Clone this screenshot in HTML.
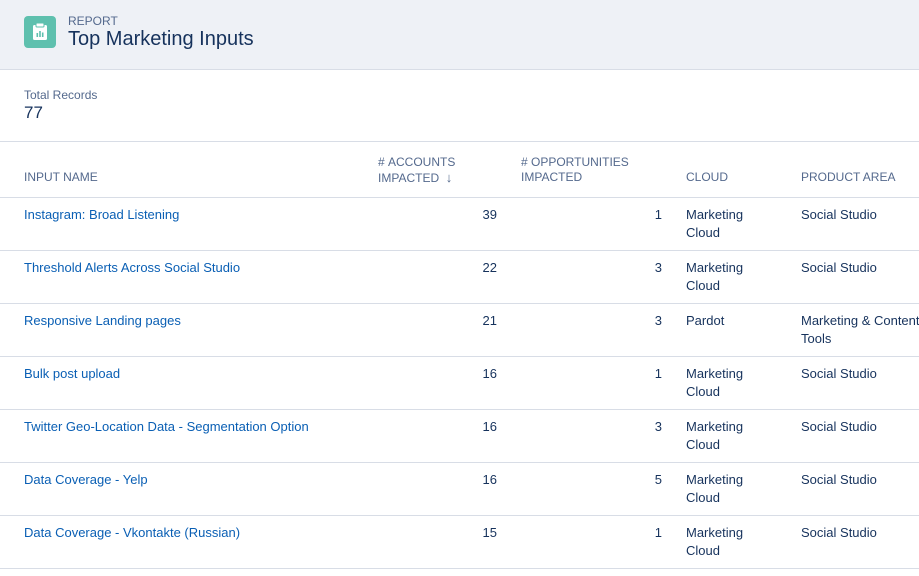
<!DOCTYPE html>
<html><head><style>
body{margin:0;width:919px;height:576px;overflow:hidden;background:#fff;font-family:"Liberation Sans",sans-serif;color:#16325c;}
.hdr{position:absolute;left:0;top:0;width:919px;height:69px;background:#eef1f6;border-bottom:1px solid #d8dde6;}
.icon{position:absolute;left:24px;top:16px;width:32px;height:32px;border-radius:4px;background:#5ec0ae;}
.lbl{position:absolute;left:68px;top:14px;font-size:12px;color:#54698d;}
.title{position:absolute;left:68px;top:28px;font-size:20px;color:#16325c;}
.tot{position:absolute;left:0;top:70px;width:919px;height:71px;border-bottom:1px solid #d8dde6;}
.t{position:absolute;font-size:13px;white-space:nowrap;line-height:18px;}
.th{color:#54698d;font-size:12px;line-height:15px;}
.row{position:absolute;left:0;width:919px;height:52px;border-bottom:1px solid #d8dde6;}
a{color:#0a5fb4;text-decoration:none}
</style></head><body>
<div class="hdr">
<div class="icon"><svg width="32" height="32" viewBox="0 0 32 32"><rect x="9" y="9" width="14" height="15" rx="1.5" fill="#fff"/><rect x="12" y="7" width="8" height="4" rx="1" fill="#fff" stroke="#5ec0ae" stroke-width="1"/><rect x="12.5" y="17" width="1.6" height="4" fill="#5ec0ae"/><rect x="15.2" y="15" width="1.6" height="6" fill="#5ec0ae"/><rect x="17.9" y="16.5" width="1.6" height="4.5" fill="#5ec0ae"/></svg></div>
<div class="lbl">REPORT</div>
<div class="title">Top Marketing Inputs</div>
</div>
<div class="tot">
<div class="t" style="left:24px;top:16px;font-size:12px;color:#54698d">Total Records</div>
<div class="t" style="left:24px;top:33px;font-size:17px;line-height:20px">77</div>
</div>
<div class="row" style="top:142px;height:55px">
<div class="t th" style="left:24px;top:28px">INPUT NAME</div>
<div class="t th" style="left:378px;top:13px">#&nbsp;ACCOUNTS<br>IMPACTED &nbsp;<b style="font-size:13px">↓</b></div>
<div class="t th" style="left:521px;top:13px">#&nbsp;OPPORTUNITIES<br>IMPACTED</div>
<div class="t th" style="left:686px;top:28px">CLOUD</div>
<div class="t th" style="left:801px;top:28px">PRODUCT AREA</div>
</div>
<div class="row" style="top:198px"><div class="t" style="left:24px;top:8px"><a>Instagram: Broad Listening</a></div><div class="t" style="right:422px;top:8px">39</div><div class="t" style="right:257px;top:8px">1</div><div class="t" style="left:686px;top:8px">Marketing<br>Cloud</div><div class="t" style="left:801px;top:8px">Social Studio</div></div>
<div class="row" style="top:251px"><div class="t" style="left:24px;top:8px"><a>Threshold Alerts Across Social Studio</a></div><div class="t" style="right:422px;top:8px">22</div><div class="t" style="right:257px;top:8px">3</div><div class="t" style="left:686px;top:8px">Marketing<br>Cloud</div><div class="t" style="left:801px;top:8px">Social Studio</div></div>
<div class="row" style="top:304px"><div class="t" style="left:24px;top:8px"><a>Responsive Landing pages</a></div><div class="t" style="right:422px;top:8px">21</div><div class="t" style="right:257px;top:8px">3</div><div class="t" style="left:686px;top:8px">Pardot</div><div class="t" style="left:801px;top:8px">Marketing &amp; Content<br>Tools</div></div>
<div class="row" style="top:357px"><div class="t" style="left:24px;top:8px"><a>Bulk post upload</a></div><div class="t" style="right:422px;top:8px">16</div><div class="t" style="right:257px;top:8px">1</div><div class="t" style="left:686px;top:8px">Marketing<br>Cloud</div><div class="t" style="left:801px;top:8px">Social Studio</div></div>
<div class="row" style="top:410px"><div class="t" style="left:24px;top:8px"><a>Twitter Geo-Location Data - Segmentation Option</a></div><div class="t" style="right:422px;top:8px">16</div><div class="t" style="right:257px;top:8px">3</div><div class="t" style="left:686px;top:8px">Marketing<br>Cloud</div><div class="t" style="left:801px;top:8px">Social Studio</div></div>
<div class="row" style="top:463px"><div class="t" style="left:24px;top:8px"><a>Data Coverage - Yelp</a></div><div class="t" style="right:422px;top:8px">16</div><div class="t" style="right:257px;top:8px">5</div><div class="t" style="left:686px;top:8px">Marketing<br>Cloud</div><div class="t" style="left:801px;top:8px">Social Studio</div></div>
<div class="row" style="top:516px"><div class="t" style="left:24px;top:8px"><a>Data Coverage - Vkontakte (Russian)</a></div><div class="t" style="right:422px;top:8px">15</div><div class="t" style="right:257px;top:8px">1</div><div class="t" style="left:686px;top:8px">Marketing<br>Cloud</div><div class="t" style="left:801px;top:8px">Social Studio</div></div>
</body></html>
